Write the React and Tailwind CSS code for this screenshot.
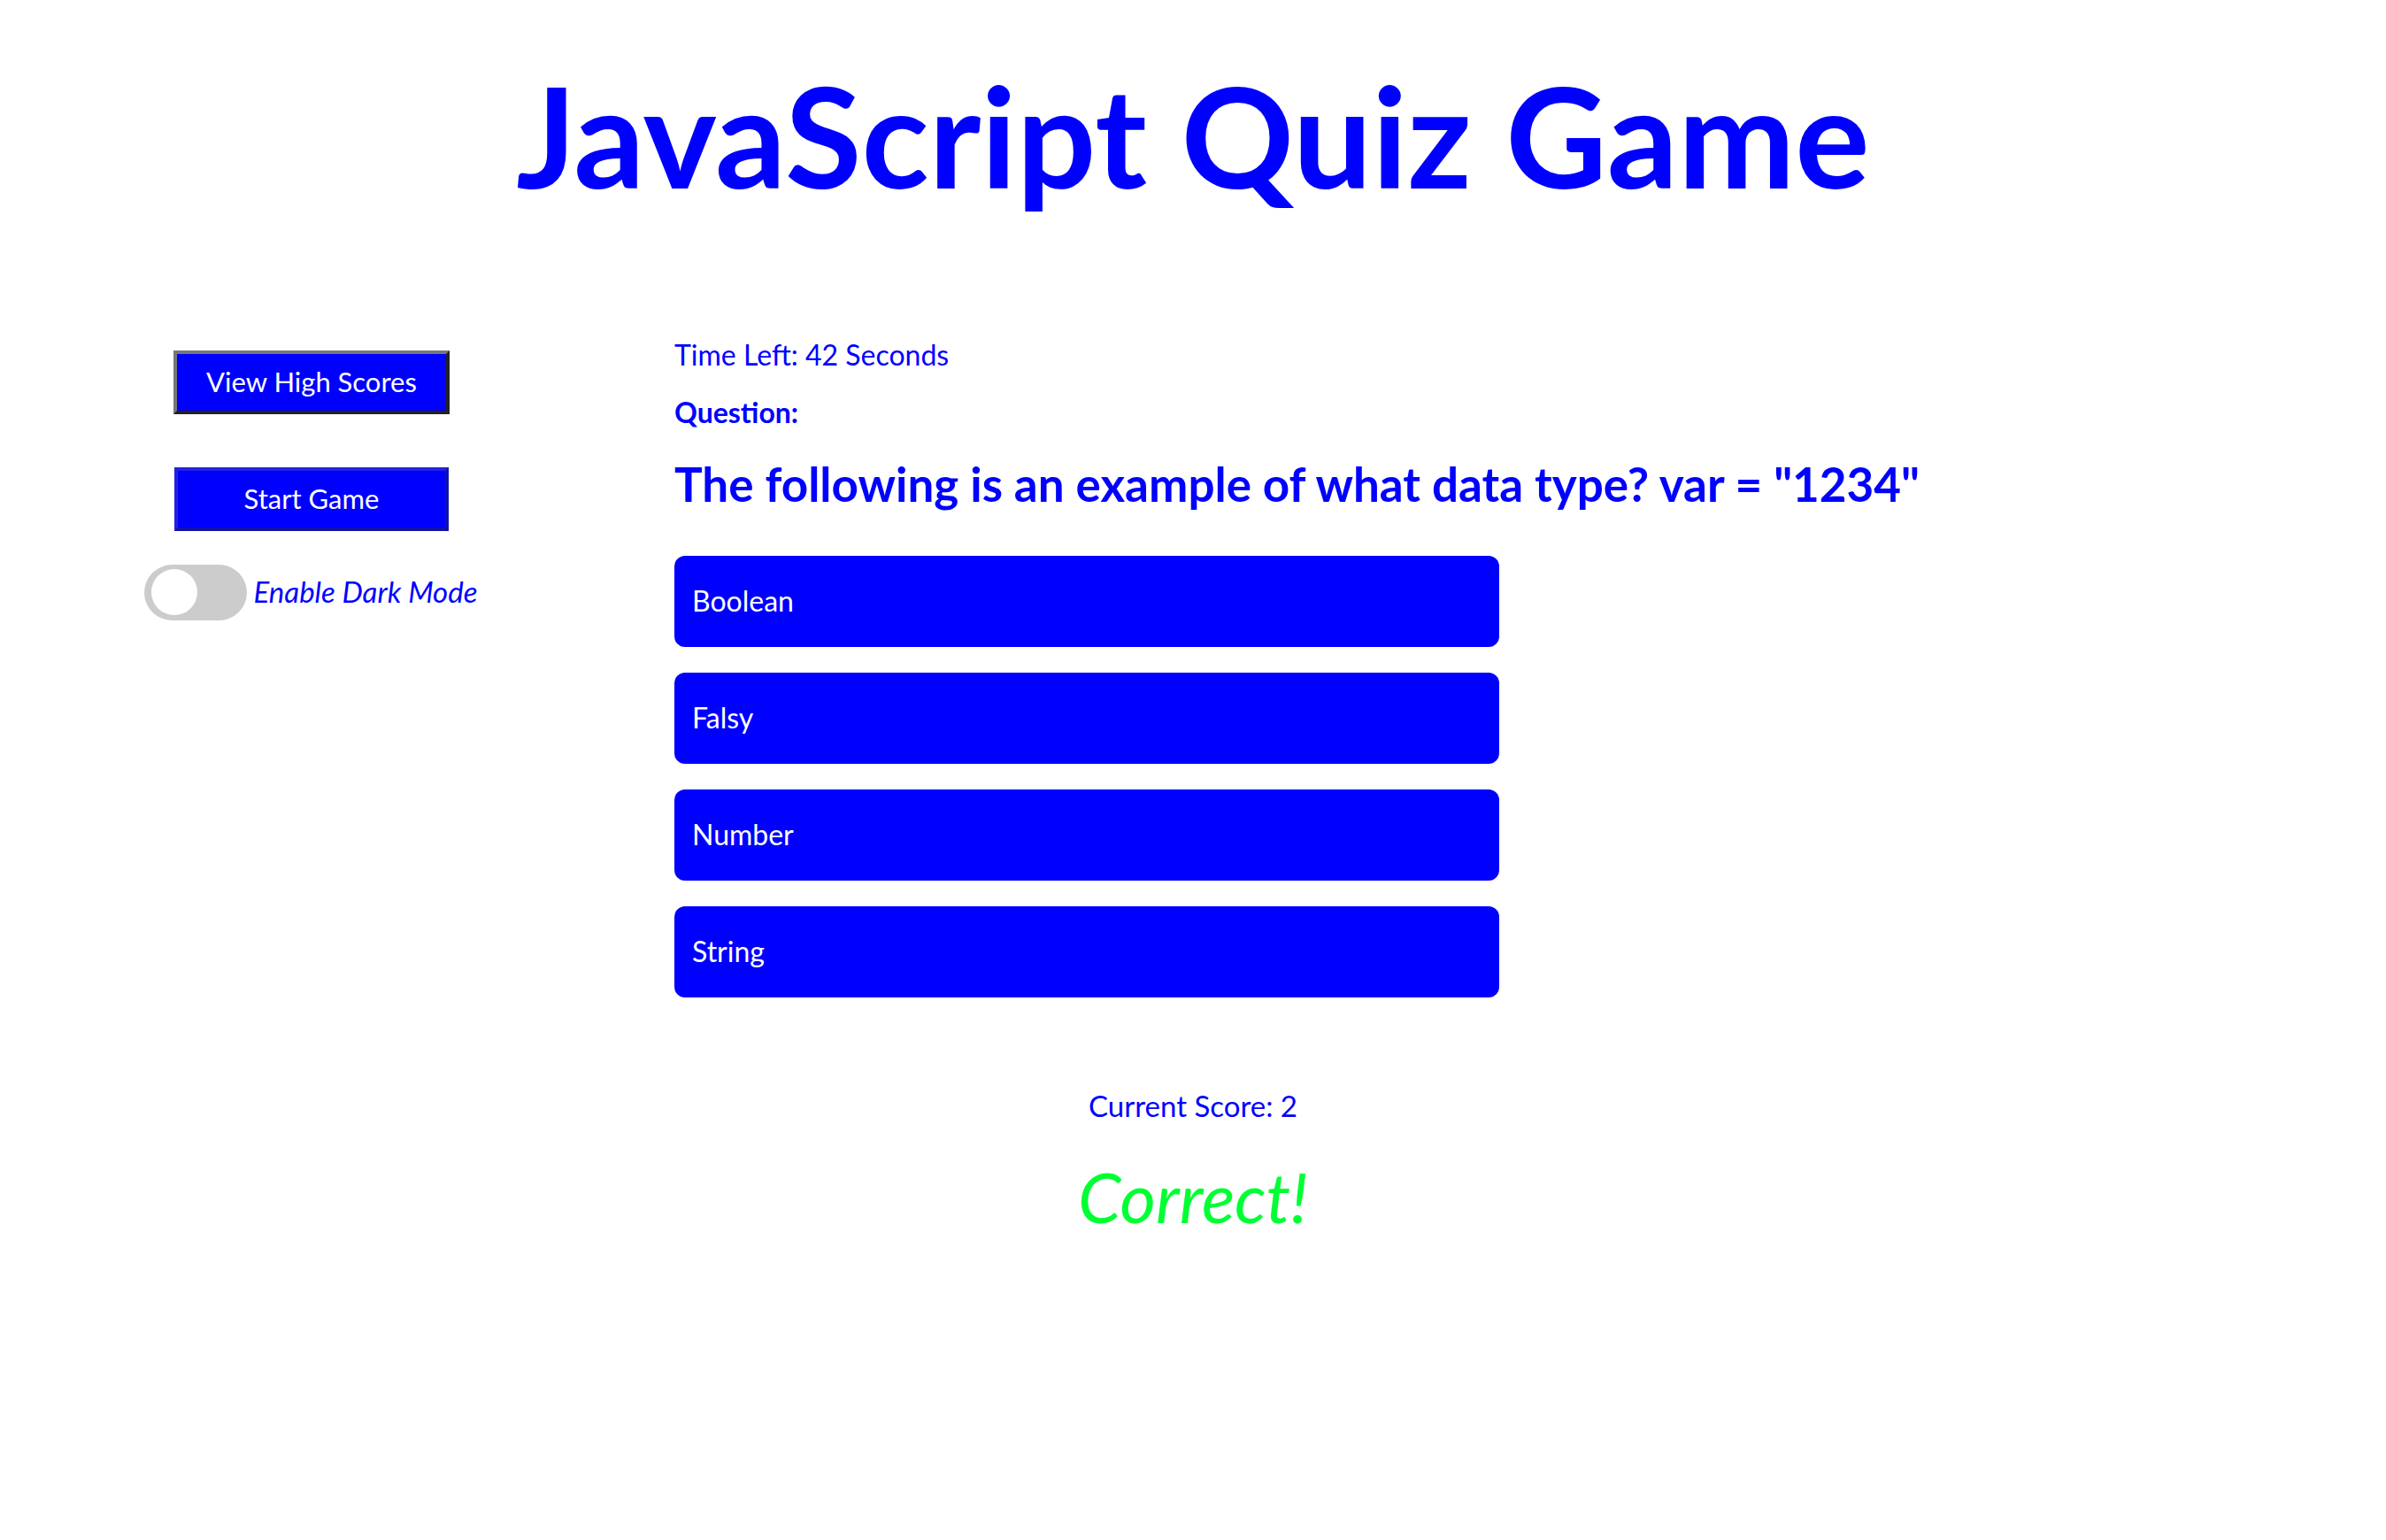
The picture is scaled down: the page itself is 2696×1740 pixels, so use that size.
import React, { useState } from 'react'

const answers = ['Boolean', 'Falsy', 'Number', 'String']

export default function App() {
  const [dark, setDark] = useState(false)

  return (
    <div className="min-h-screen bg-white text-[#0000ff] font-['Trebuchet_MS',Lato,'Liberation_Sans',sans-serif]">
      <header className="pt-[58px] text-center">
        <h1 className="text-[158px] leading-[1.2] font-bold">JavaScript Quiz Game</h1>
      </header>

      <div className="flex mt-[134px]">
        {/* sidebar */}
        <aside className="w-[704px] flex flex-col items-center pt-[14px]">
          <button className="w-[312px] h-[72px] bg-[#0000ff] text-white text-[31px] border-4 border-t-[#777777] border-l-[#777777] border-b-[#222222] border-r-[#222222]">
            View High Scores
          </button>
          <button className="mt-[60px] w-[310px] h-[72px] bg-[#0000ff] text-white text-[31px] border-4 border-t-[#2222dd] border-l-[#2222dd] border-b-[#1111aa] border-r-[#1111aa]">
            Start Game
          </button>
          <label className="mt-[38px] -ml-[2px] flex items-center gap-[8px] cursor-pointer">
            <span
              onClick={() => setDark(!dark)}
              className="relative w-[116px] h-[63px] rounded-full bg-[#cccccc] block"
            >
              <span className="absolute left-[8px] top-[5px] w-[52px] h-[52px] rounded-full bg-white" />
            </span>
            <span className="italic text-[33px]">Enable Dark Mode</span>
          </label>
        </aside>

        {/* quiz */}
        <main className="ml-[58px] flex-1">
          <p className="text-[32px] leading-[1.2]">Time Left: 42 Seconds</p>
          <p className="mt-[27px] text-[32px] leading-[1.2] font-bold">Question:</p>
          <h2 className="mt-[30px] text-[53px] leading-[1.2] font-bold">
            The following is an example of what data type? var = "1234"
          </h2>
          <div className="mt-[49px] flex flex-col gap-[29px] w-[932px]">
            {answers.map((a) => (
              <button
                key={a}
                className="h-[103px] rounded-[12px] bg-[#0000ff] text-white text-left pl-[20px] text-[32px]"
              >
                {a}
              </button>
            ))}
          </div>
        </main>
      </div>

      <div className="mt-[103px] text-center">
        <p className="text-[33px] leading-[1.2]">Current Score: 2</p>
        <p className="mt-[36px] italic text-[78px] leading-[1.2] text-[#00ff33]">Correct!</p>
      </div>
    </div>
  )
}
